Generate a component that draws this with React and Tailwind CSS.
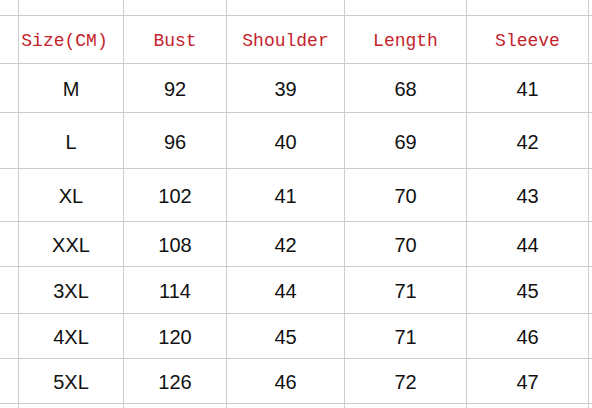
import React from "react";

const header = ["Size(CM)", "Bust", "Shoulder", "Length", "Sleeve"];
const rows = [
  ["M", "92", "39", "68", "41"],
  ["L", "96", "40", "69", "42"],
  ["XL", "102", "41", "70", "43"],
  ["XXL", "108", "42", "70", "44"],
  ["3XL", "114", "44", "71", "45"],
  ["4XL", "120", "45", "71", "46"],
  ["5XL", "126", "46", "72", "47"],
];

function Cell({ children, className = "" }) {
  return (
    <div className={"bg-white flex items-center justify-center " + className}>
      {children}
    </div>
  );
}

export default function App() {
  const allRows = [null, header, ...rows, null];
  return (
    <div className="w-[592px] h-[408px] overflow-hidden bg-white">
      <div className="grid gap-px bg-[#cdcdcd] w-[592px] h-[408px] grid-cols-[18px_104px_102px_117px_121px_121px_3px] grid-rows-[15px_47px_48px_55px_52px_44px_46px_44px_44px_4px]">
        {allRows.map((r, ri) => (
          <React.Fragment key={ri}>
            <Cell />
            {[0, 1, 2, 3, 4].map((ci) => (
              <Cell key={ci}>
                {r && ri === 1 ? (
                  <span
                    className={"text-[18px] leading-none text-[#c4232c] mt-[3px] " + (ci === 0 ? "mr-[13px]" : "")}
                    style={{ fontFamily: '"Liberation Mono", "DejaVu Sans Mono", monospace' }}
                  >
                    {r[ci]}
                  </span>
                ) : r ? (
                  <span className="text-[20px] leading-none text-[#111] mt-[2px]" style={{ fontFamily: '"Liberation Sans", Arial, sans-serif' }}>
                    {r[ci]}
                  </span>
                ) : null}
              </Cell>
            ))}
            <Cell />
          </React.Fragment>
        ))}
      </div>
    </div>
  );
}
